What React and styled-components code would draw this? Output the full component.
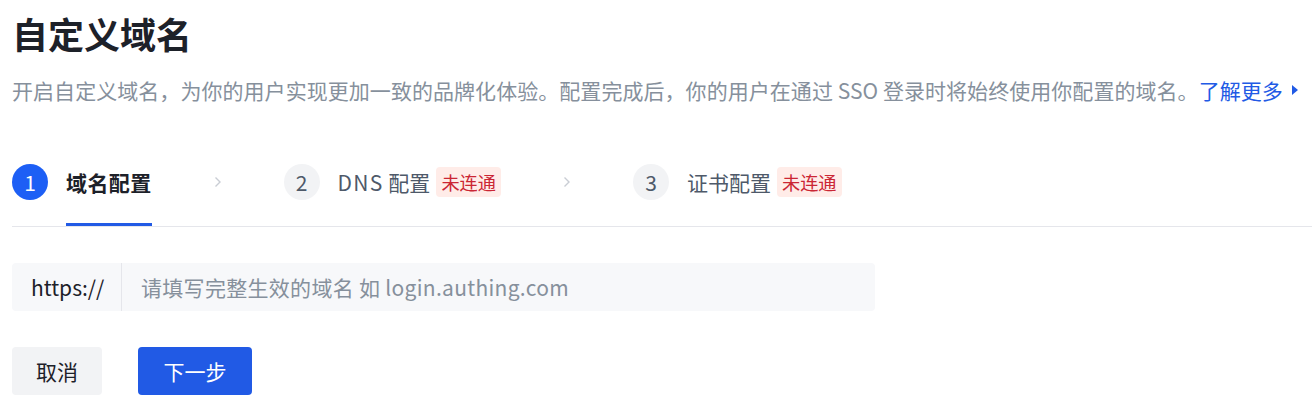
import styled, { createGlobalStyle } from "styled-components";

const GlobalStyle = createGlobalStyle`
  body {
    margin: 0;
    background: #fff;
    font-family: "Noto Sans CJK SC", "Noto Sans", sans-serif;
    color: #1d2129;
  }
`;

const Page = styled.div`
  padding: 0 0 0 12px;
`;

const Title = styled.h1`
  margin: 8px 0 0;
  font-size: 36px;
  line-height: 50px;
  font-weight: 700;
  color: #1d2129;
`;

const Desc = styled.p`
  margin: 17px 0 0;
  font-size: 21px;
  line-height: 30px;
  letter-spacing: 0.05px;
  color: #86909c;
  white-space: nowrap;
`;

const Link = styled.a`
  color: #215ae5;
  text-decoration: none;
  display: inline-flex;
  align-items: center;
  gap: 9px;
`;

const Steps = styled.div`
  display: flex;
  align-items: flex-start;
  margin-top: 59px;
  border-bottom: 1px solid #e5e6eb;
`;

const Step = styled.div`
  display: flex;
  align-items: flex-start;
`;

const Num = styled.span`
  width: 36px;
  height: 36px;
  border-radius: 50%;
  display: flex;
  align-items: center;
  justify-content: center;
  font-size: 21px;
  flex-shrink: 0;
  background: ${(p) => (p.$active ? "#1d5ff5" : "#f2f3f5")};
  color: ${(p) => (p.$active ? "#fff" : "#4e5969")};
`;

const Label = styled.span`
  margin-left: 18px;
  font-size: 21px;
  line-height: 36px;
  padding-bottom: 23px;
  border-bottom: 3px solid ${(p) => (p.$active ? "#215ae5" : "transparent")};
  font-weight: ${(p) => (p.$active ? 700 : 400)};
  color: ${(p) => (p.$active ? "#1d2129" : "#4e5969")};
  letter-spacing: ${(p) => (p.$active ? "0.4px" : "0")};
  white-space: nowrap;
`;

const Latin = styled.span`
  letter-spacing: 1.3px;
`;

const Tag = styled.span`
  margin-left: 6px;
  margin-top: 3px;
  height: 30px;
  padding: 0 5px;
  border-radius: 4px;
  background: #ffece8;
  color: #cb2634;
  font-size: 18.2px;
  line-height: 30px;
  white-space: nowrap;
`;

const Arrow = styled.span`
  display: flex;
  align-items: center;
  height: 36px;
  margin: 0 62px;
`;

const Field = styled.div`
  display: flex;
  align-items: stretch;
  width: 863px;
  height: 48px;
  margin-top: 36px;
  background: #f7f8fa;
  border-radius: 4px;
`;

const Prefix = styled.span`
  display: flex;
  align-items: center;
  padding: 0 18px 0 19px;
  width: 110px;
  box-sizing: border-box;
  border-right: 1px solid #e5e6eb;
  font-size: 21px;
  color: #1d2129;
`;

const Input = styled.input`
  flex: 1;
  border: none;
  outline: none;
  background: transparent;
  padding: 0 19px;
  font-family: inherit;
  font-size: 21px;
  letter-spacing: 0.3px;
  color: #1d2129;
  &::placeholder {
    color: #86909c;
  }
`;

const Actions = styled.div`
  display: flex;
  gap: 36px;
  margin-top: 36px;
`;

const Button = styled.button`
  height: 48px;
  padding: 0 ${(p) => (p.$primary ? "25.5px" : "24px")};
  border: none;
  border-radius: 4px;
  font-family: inherit;
  font-size: 21px;
  cursor: pointer;
  background: ${(p) => (p.$primary ? "#215ae5" : "#f2f3f5")};
  color: ${(p) => (p.$primary ? "#fff" : "#1d2129")};
`;

const Chevron = () => (
  <svg width="8" height="12" viewBox="0 0 8 12">
    <polyline points="1.5,1.5 6,6 1.5,10.5" fill="none" stroke="#c9cdd4" strokeWidth="1.4" />
  </svg>
);

const steps = [
  { n: 1, label: "域名配置", active: true },
  { n: 2, label: <><Latin>DNS</Latin> 配置</>, tag: "未连通" },
  { n: 3, label: "证书配置", tag: "未连通" },
];

export default function App() {
  return (
    <Page>
      <GlobalStyle />
      <Title>自定义域名</Title>
      <Desc>
        开启自定义域名，为你的用户实现更加一致的品牌化体验。配置完成后，你的用户在通过 SSO 登录时将始终使用你配置的域名。
        <Link href="#">
          了解更多
          <svg width="6" height="10" viewBox="0 0 6 10">
            <path d="M0 0 L6 5 L0 10 Z" fill="#215ae5" />
          </svg>
        </Link>
      </Desc>

      <Steps>
        {steps.map((s, i) => (
          <Step key={s.n}>
            <Num $active={s.active}>{s.n}</Num>
            <Label $active={s.active}>{s.label}</Label>
            {s.tag && <Tag>{s.tag}</Tag>}
            {i < steps.length - 1 && (
              <Arrow>
                <Chevron />
              </Arrow>
            )}
          </Step>
        ))}
      </Steps>

      <Field>
        <Prefix>https://</Prefix>
        <Input placeholder="请填写完整生效的域名 如 login.authing.com" />
      </Field>

      <Actions>
        <Button>取消</Button>
        <Button $primary>下一步</Button>
      </Actions>
    </Page>
  );
}
